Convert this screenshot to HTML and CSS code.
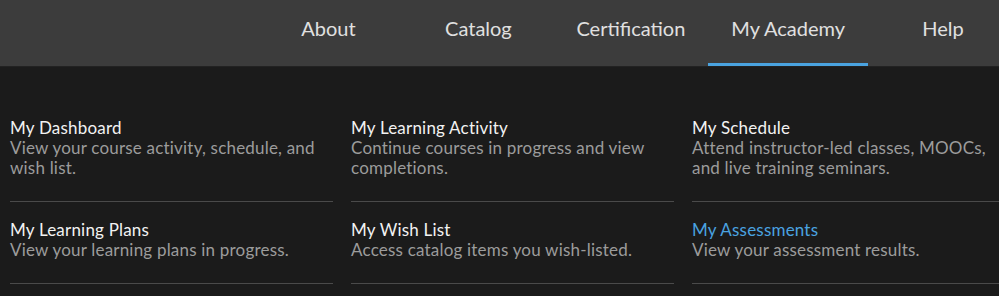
FILE: index.html
```html
<!DOCTYPE html>
<html lang="en">
<head>
    <meta charset="UTF-8">
    <meta name="viewport" content="width=device-width, initial-scale=1.0">
    <title>My Academy</title>
    <link rel="stylesheet" href="styles.css">
</head>
<body>
    <header class="top-bar">
        <nav class="main-nav">
            <a class="nav-item" href="#">About</a>
            <a class="nav-item" href="#">Catalog</a>
            <a class="nav-item" href="#">Certification</a>
            <a class="nav-item active" href="#">My Academy</a>
            <a class="nav-item" href="#">Help</a>
        </nav>
    </header>

    <div class="dropdown">
        <div class="menu-grid">
            <a class="menu-item" href="#">
                <span class="menu-title">My Dashboard</span>
                <span class="menu-desc">View your course activity, schedule, and wish list.</span>
            </a>
            <a class="menu-item" href="#">
                <span class="menu-title">My Learning Activity</span>
                <span class="menu-desc">Continue courses in progress and view completions.</span>
            </a>
            <a class="menu-item" href="#">
                <span class="menu-title">My Schedule</span>
                <span class="menu-desc">Attend instructor-led classes, MOOCs, and live training seminars.</span>
            </a>
            <a class="menu-item" href="#">
                <span class="menu-title">My Learning Plans</span>
                <span class="menu-desc">View your learning plans in progress.</span>
            </a>
            <a class="menu-item" href="#">
                <span class="menu-title">My Wish List</span>
                <span class="menu-desc">Access catalog items you wish-listed.</span>
            </a>
            <a class="menu-item current" href="#">
                <span class="menu-title">My Assessments</span>
                <span class="menu-desc">View your assessment results.</span>
            </a>
        </div>
    </div>
</body>
</html>
```

FILE: styles.css
```css
body {
    margin: 0;
    background-color: #1b1b1b;
    font-family: Lato, "Open Sans", sans-serif;
    overflow: hidden;
}

a {
    text-decoration: none;
}

.top-bar {
    display: flex;
    justify-content: flex-end;
    height: 67px;
    background-color: #3c3c3c;
    border-bottom: 1px solid #222222;
    box-sizing: border-box;
}

.main-nav {
    display: flex;
    margin-right: -19px;
}

.nav-item {
    display: flex;
    justify-content: center;
    align-items: center;
    min-width: 150px;
    padding: 0 23px 8px;
    box-sizing: border-box;
    border-bottom: 3px solid transparent;
    font-size: 20px;
    color: #e0e0e0;
}

.nav-item.active {
    border-bottom-color: #4aa3e0;
}

.dropdown {
    padding: 33px 0 0 10px;
}

.menu-grid {
    display: grid;
    grid-template-columns: repeat(3, 323px);
    column-gap: 18px;
}

.menu-item {
    display: flex;
    flex-direction: column;
    padding: 17px 0 23px;
    border-bottom: 1px solid #4a4a4a;
    letter-spacing: 0.2px;
}

.menu-title {
    font-size: 17px;
    line-height: 21px;
    color: #f2f2f2;
}

.menu-desc {
    padding-right: 4px;
    font-size: 17px;
    line-height: 20px;
    color: #9c9c9c;
}

.menu-item.current .menu-title {
    color: #4aa3e0;
}
```
